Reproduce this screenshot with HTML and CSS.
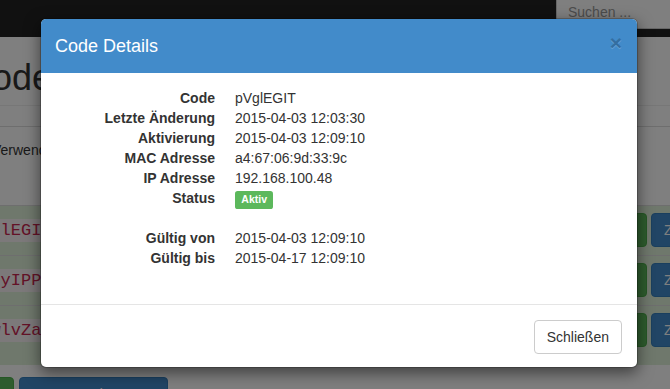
FILE: index.html
```html
<!DOCTYPE html>
<html lang="de">
<head>
<meta charset="utf-8">
<title>Codes</title>
<link rel="stylesheet" href="styles.css">
</head>
<body>
<div class="page">
  <header class="navbar">
    <div class="search">Suchen ...</div>
  </header>
  <main class="main">
    <h1 class="title">Codes</h1>
    <div class="rule"></div>
    <p class="hint">Verwendete Codes werden nach Ablauf automatisch deaktiviert.</p>
    <table class="codes">
      <tr>
        <td class="code-cell"><code>pVglEGIT</code></td>
        <td class="fill"></td>
        <td class="actions-cell"><div class="actions"><button class="btn btn-success">Details</button><button class="btn btn-primary btn-reset">Zurücksetzen</button></div></td>
      </tr>
      <tr>
        <td class="code-cell"><code>mKcyIPPs</code></td>
        <td class="fill"></td>
        <td class="actions-cell"><div class="actions"><button class="btn btn-success">Details</button><button class="btn btn-primary btn-reset">Zurücksetzen</button></div></td>
      </tr>
      <tr class="last">
        <td class="code-cell"><code>rBwlvZaH</code></td>
        <td class="fill"></td>
        <td class="actions-cell"><div class="actions"><button class="btn btn-success">Details</button><button class="btn btn-primary btn-reset">Zurücksetzen</button></div></td>
      </tr>
    </table>
    <div class="page-actions">
      <button class="btn btn-success btn-back">«</button>
      <button class="btn btn-primary btn-new">Neuen Code erzeugen</button>
    </div>
  </main>
</div>

<div class="backdrop"></div>

<div class="modal">
  <div class="modal-header">
    <h4 class="modal-title">Code Details</h4>
    <button class="close" type="button">×</button>
  </div>
  <div class="modal-body">
    <dl class="details">
      <dt>Code</dt><dd>pVglEGIT</dd>
      <dt>Letzte Änderung</dt><dd>2015-04-03 12:03:30</dd>
      <dt>Aktivierung</dt><dd>2015-04-03 12:09:10</dd>
      <dt>MAC Adresse</dt><dd>a4:67:06:9d:33:9c</dd>
      <dt>IP Adresse</dt><dd>192.168.100.48</dd>
      <dt>Status</dt><dd><span class="label">Aktiv</span></dd>
    </dl>
    <dl class="details">
      <dt>Gültig von</dt><dd>2015-04-03 12:09:10</dd>
      <dt>Gültig bis</dt><dd>2015-04-17 12:09:10</dd>
    </dl>
  </div>
  <div class="modal-footer">
    <button class="btn btn-default" type="button">Schließen</button>
  </div>
</div>
</body>
</html>
```
FILE: styles.css
```css
html, body {
  margin: 0;
  padding: 0;
}

body {
  width: 670px;
  height: 389px;
  overflow: hidden;
  position: relative;
  font-family: "Liberation Sans", Arial, sans-serif;
  font-size: 14px;
  line-height: 20px;
  color: #333;
  background: #fff;
}

.page {
  width: 670px;
  height: 389px;
  overflow: hidden;
}

.navbar {
  height: 37px;
  background: #222;
  display: flex;
  justify-content: flex-end;
}

.search {
  width: 114px;
  height: 29px;
  box-sizing: border-box;
  background: #fff;
  border-left: 1px solid #ccc;
  border-bottom: 1px solid #ccc;
  padding: 4px 0 0 11px;
  color: #999;
  font-size: 14px;
  line-height: 16px;
  white-space: nowrap;
}

.main {
  margin-left: -42px;
  width: 821px;
}

.title {
  margin: 21px 0 0;
  padding: 0 0 7px 8px;
  font-size: 36px;
  line-height: 40px;
  font-weight: 500;
  border-bottom: 1px solid #eee;
}

.rule {
  margin-top: 20px;
  border-top: 1px solid #ddd;
}

.hint {
  margin: 13px 0 0;
  padding-left: 34px;
  white-space: nowrap;
}

.codes {
  margin-top: 45px;
  width: 821px;
  border-collapse: separate;
  border-spacing: 0;
}

.codes td {
  padding: 7px 8px 8px;
  border-top: 1px solid #ddd;
  background: #dff0d8;
  vertical-align: middle;
}

.codes tr.last td {
  padding-bottom: 18px;
}

.code-cell {
  white-space: nowrap;
  width: 1%;
}

.actions-cell {
  width: 1%;
  white-space: nowrap;
}

.actions {
  display: flex;
  justify-content: flex-end;
  gap: 4px;
}

code {
  font-family: "Liberation Mono", "Courier New", monospace;
  font-size: 17px;
  line-height: 19px;
  padding: 2px 4px;
  color: #c7254e;
  background: #f9f2f4;
  border-radius: 4px;
}

.page-actions {
  margin-top: 12px;
  padding-left: 15px;
  display: flex;
  gap: 5px;
}

.btn {
  height: 34px;
  box-sizing: border-box;
  padding: 6px 12px;
  font-family: "Liberation Sans", Arial, sans-serif;
  font-size: 14px;
  line-height: 20px;
  border: 1px solid transparent;
  border-radius: 4px;
  white-space: nowrap;
}

.btn-success {
  background: #5cb85c;
  border-color: #4cae4c;
  color: #fff;
}

.btn-primary {
  background: #428bca;
  border-color: #357ebd;
  color: #fff;
}

.btn-reset {
  width: 120px;
  text-align: left;
}

.btn-back {
  width: 41px;
}

.btn-new {
  width: 149px;
}

.btn-default {
  background: #fff;
  border-color: #ccc;
  color: #333;
}

.backdrop {
  position: absolute;
  inset: 0;
  background: rgba(0, 0, 0, 0.5);
}

.modal {
  position: absolute;
  left: 40px;
  top: 18px;
  width: 598px;
  box-sizing: border-box;
  background: #fff;
  background-clip: padding-box;
  border: 1px solid rgba(0, 0, 0, 0.2);
  border-radius: 6px;
  box-shadow: 0 5px 15px rgba(0, 0, 0, 0.5);
  overflow: hidden;
}

.modal-header {
  height: 54px;
  box-sizing: border-box;
  padding: 0 15px 0 14px;
  background: #428bca;
  display: flex;
  align-items: center;
  justify-content: space-between;
}

.modal-title {
  margin: 0;
  font-size: 18px;
  font-weight: normal;
  line-height: 26px;
  color: #fff;
}

.close {
  font-family: "Liberation Sans", Arial, sans-serif;
  font-size: 21px;
  font-weight: bold;
  line-height: 1;
  color: #000;
  opacity: 0.2;
  text-shadow: 0 1px 0 #fff;
  background: none;
  border: 0;
  padding: 0;
  margin-top: -8px;
}

.modal-body {
  padding: 15px 15px 16px;
}

.details {
  display: grid;
  grid-template-columns: 159px 1fr;
  column-gap: 20px;
  margin: 0 0 20px;
}

.details dt {
  font-weight: bold;
  text-align: right;
  white-space: nowrap;
}

.details dd {
  margin: 0;
  height: 20px;
}

.label {
  display: inline-block;
  font-size: 10.5px;
  font-weight: bold;
  line-height: 1;
  padding: 0.3em 0.6em 0.4em;
  background: #5cb85c;
  color: #fff;
  border-radius: 0.25em;
}

.modal-footer {
  border-top: 1px solid #e5e5e5;
  padding: 15px 15px 13px;
  display: flex;
  justify-content: flex-end;
}
```
